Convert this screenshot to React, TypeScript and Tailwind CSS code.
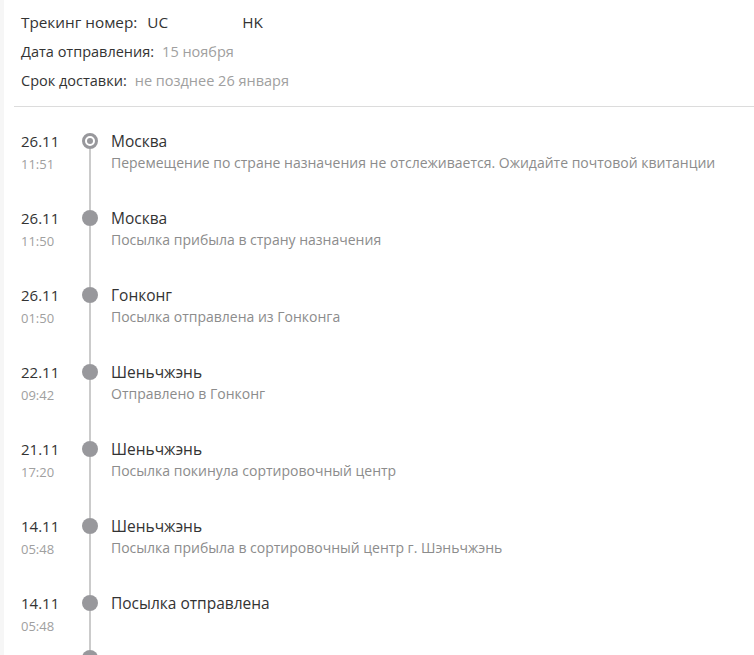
import React from "react";

type Item = { date: string; time: string; title: string; desc?: string; current?: boolean };

const items: Item[] = [
  { date: "26.11", time: "11:51", title: "Москва", desc: "Перемещение по стране назначения не отслеживается. Ожидайте почтовой квитанции", current: true },
  { date: "26.11", time: "11:50", title: "Москва", desc: "Посылка прибыла в страну назначения" },
  { date: "26.11", time: "01:50", title: "Гонконг", desc: "Посылка отправлена из Гонконга" },
  { date: "22.11", time: "09:42", title: "Шеньчжэнь", desc: "Отправлено в Гонконг" },
  { date: "21.11", time: "17:20", title: "Шеньчжэнь", desc: "Посылка покинула сортировочный центр" },
  { date: "14.11", time: "05:48", title: "Шеньчжэнь", desc: "Посылка прибыла в сортировочный центр г. Шэньчжэнь" },
  { date: "14.11", time: "05:48", title: "Посылка отправлена" },
  { date: "", time: "", title: "" },
];

export default function App() {
  return (
    <div
      className="flex h-[655px] w-[754px] overflow-hidden bg-white"
      style={{ fontFamily: '"Open Sans", "Noto Sans", sans-serif' }}
    >
      <div className="w-[4px] shrink-0 bg-[#f6f6f6]" />
      <div className="flex-1 pl-[10px]">
        <div className="pl-[7px] pt-[8px]">
          <div className="flex items-center leading-[29px] text-[15.3px] text-[#333]">
            <span>Трекинг номер:</span>
            <span className="ml-[10px]">UC</span>
            <span className="inline-block w-[74px]" />
            <span>HK</span>
          </div>
          <div className="flex items-center leading-[29px] text-[14.5px]">
            <span className="text-[#333]">Дата отправления:</span>
            <span className="ml-[8px] text-[#a0a0a0]">15 ноября</span>
          </div>
          <div className="flex items-center leading-[29px] text-[14.5px]">
            <span className="text-[#333]">Срок доставки:</span>
            <span className="ml-[8px] text-[#a0a0a0]">не позднее 26 января</span>
          </div>
        </div>
        <div className="mt-[11px] h-px bg-[#dcdcdc]" />
        <div className="mt-[26px] pl-[7px]">
          {items.map((it, i) => (
            <div key={i} className={`flex ${it.desc ? "h-[77px]" : "h-[55px]"}`}>
              <div className="w-[61px] shrink-0">
                <div className="text-[15px] leading-[16px] text-[#333]">{it.date}</div>
                <div className="mt-[5px] text-[13px] leading-[20px] text-[#a0a0a0]">{it.time}</div>
              </div>
              <div className="flex w-[16px] shrink-0 flex-col items-center">
                {it.current ? (
                  <div className="flex h-[16px] w-[16px] shrink-0 items-center justify-center rounded-full border-[3px] border-[#98989c] bg-white">
                    <div className="h-[6px] w-[6px] rounded-full bg-[#98989c]" />
                  </div>
                ) : (
                  <div className="h-[16px] w-[16px] shrink-0 rounded-full bg-[#98989c]" />
                )}
                {i < items.length - 1 && <div className="w-[2px] flex-1 bg-[#cbcbcb]" />}
              </div>
              <div className="ml-[13px]">
                <div className="text-[15.5px] leading-[16px] text-[#333]">{it.title}</div>
                {it.desc && (
                  <div className="mt-[4px] text-[14px] leading-[20px] text-[#8c8c8c]">{it.desc}</div>
                )}
              </div>
            </div>
          ))}
        </div>
      </div>
    </div>
  );
}
